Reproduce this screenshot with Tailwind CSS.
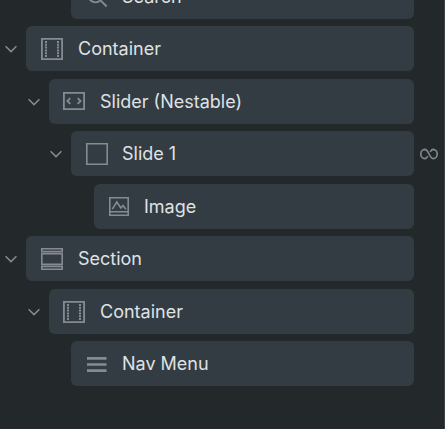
<!DOCTYPE html>
<html lang="en">
<head>
<meta charset="utf-8">
<title>Structure</title>
<script src="https://cdn.jsdelivr.net/npm/@tailwindcss/browser@4"></script>
</head>
<body class="bg-[#23282b]">
<svg class="hidden">
  <symbol id="chevron" viewBox="0 0 12 8"><path d="M.6 1.200 6 6.600l5.400-5.400" fill="none" stroke="currentColor" stroke-width="1.500"/></symbol>
  <symbol id="container" viewBox="0 0 22 22"><g fill="none" stroke="currentColor"><path d="M.9.9h20.200v20.200H.9z" stroke-width="1.800"/><path d="M5 3v16M17 3v16" stroke-width="2" stroke-dasharray="2 .8"/></g></symbol>
</svg>
<main class="h-[429px] w-[445px] overflow-hidden border-r border-[#3d4246] font-['Inter',sans-serif] text-[18px] leading-[45px] text-[#dfe2e4]">
  <ul class="-mt-[26px] flex flex-col text-[#858b91]">
    <li class="mb-[7px] flex h-[45px] pl-[71px]">
      <div class="flex w-[343px] items-center rounded-md bg-[#343c43] pl-[15px]">
        <svg class="mt-px h-[22px] w-[22px]" viewBox="0 0 22 22" fill="none" stroke="currentColor" stroke-width="1.800"><circle cx="9.500" cy="9.300" r="7"/><path d="m14.500 14.300 6.200 6.200"/></svg>
        <span class="ml-[14px] text-[#dfe2e4]">Search</span>
      </div>
    </li>
    <li class="mb-[8px] flex h-[45px] items-center pl-[5px]">
      <svg class="mr-[9px] h-[8px] w-[12px]"><use href="#chevron"/></svg>
      <div class="flex h-full w-[388px] items-center rounded-md bg-[#343c43] pl-[15px]">
        <svg class="mt-px h-[22px] w-[22px]"><use href="#container"/></svg>
        <span class="ml-[15px] text-[#dfe2e4]">Container</span>
      </div>
    </li>
    <li class="mb-[7px] flex h-[45px] items-center pl-[28px]">
      <svg class="mr-[9px] h-[8px] w-[12px]"><use href="#chevron"/></svg>
      <div class="flex h-full w-[365px] items-center rounded-md bg-[#343c43] pl-[14px]">
        <svg class="-mt-px h-[18px] w-[22px]" viewBox="0 0 22 18" fill="none" stroke="currentColor" stroke-width="1.800"><path d="M.9.9h20.200v16.200H.9zM7.300 6.200 4.400 9l2.900 2.800M14.700 6.200 17.600 9l-2.900 2.800"/></svg>
        <span class="ml-[15px] text-[#dfe2e4]">Slider (Nestable)</span>
      </div>
    </li>
    <li class="mb-[8px] flex h-[45px] items-center pl-[50px]">
      <svg class="mr-[9px] h-[8px] w-[12px]"><use href="#chevron"/></svg>
      <div class="flex h-full w-[343px] items-center rounded-md bg-[#343c43] pl-[15px]">
        <svg class="mt-px h-[22px] w-[22px]" viewBox="0 0 22 22" fill="none" stroke="currentColor" stroke-width="1.600"><path d="M.8.8h20.400v20.400H.8z"/></svg>
        <span class="ml-[14px] text-[#dfe2e4]">Slide 1</span>
      </div>
      <svg class="ml-[6px] h-[12px] w-[18px]" viewBox="0 0 18 12" fill="none" stroke="currentColor" stroke-width="1.600"><path d="M7.800 8.200C7 9.700 6.200 10.600 4.900 10.600A4.200 4.500 0 0 1 .8 6a4.200 4.500 0 0 1 4.100-4.600C8.600 1.400 9.400 10.600 13.100 10.600A4.200 4.500 0 0 0 17.200 6a4.200 4.500 0 0 0-4.100-4.600c-1.300 0-2.100.9-2.900 2.400"/></svg>
    </li>
    <li class="mb-[7px] flex h-[45px] pl-[94px]">
      <div class="flex w-[320px] items-center rounded-md bg-[#343c43] pl-[15px]">
        <svg class="h-[19px] w-[20px]" viewBox="0 0 20 19" fill="none" stroke="currentColor" stroke-width="1.600"><path d="M.8.8h18.400v17.400H.8zM.8 14.700h18.400M3.300 12.200l4.500-7.200 4 6 2.200-2.500 2.900 3.700"/></svg>
        <span class="ml-[15px] text-[#dfe2e4]">Image</span>
      </div>
    </li>
    <li class="mb-[8px] flex h-[45px] items-center pl-[5px]">
      <svg class="mr-[9px] h-[8px] w-[12px]"><use href="#chevron"/></svg>
      <div class="flex h-full w-[388px] items-center rounded-md bg-[#343c43] pl-[15px]">
        <svg class="mt-px h-[22px] w-[22px]" viewBox="0 0 22 22" fill="none" stroke="currentColor" stroke-width="1.600"><path d="M.8.8h20.400v2.800H.8zM.8 5.800h20.400v10.400H.8zM.8 18.400h20.400v2.800H.8z"/></svg>
        <span class="ml-[15px] text-[#dfe2e4]">Section</span>
      </div>
    </li>
    <li class="mb-[7px] flex h-[45px] items-center pl-[28px]">
      <svg class="mr-[9px] h-[8px] w-[12px]"><use href="#chevron"/></svg>
      <div class="flex h-full w-[365px] items-center rounded-md bg-[#343c43] pl-[14px]">
        <svg class="mt-px h-[22px] w-[22px]"><use href="#container"/></svg>
        <span class="ml-[15px] text-[#dfe2e4]">Container</span>
      </div>
    </li>
    <li class="flex h-[45px] pl-[71px]">
      <div class="flex w-[343px] items-center rounded-md bg-[#343c43] pl-[16px]">
        <svg class="mt-px h-[15px] w-[20px]" viewBox="0 0 20 15" fill="none" stroke="currentColor" stroke-width="2.600"><path d="M0 1.400h19.500M0 7.500h19.500M0 13.600h19.500"/></svg>
        <span class="ml-[15px] text-[#dfe2e4]">Nav Menu</span>
      </div>
    </li>
  </ul>
</main>
</body>
</html>
